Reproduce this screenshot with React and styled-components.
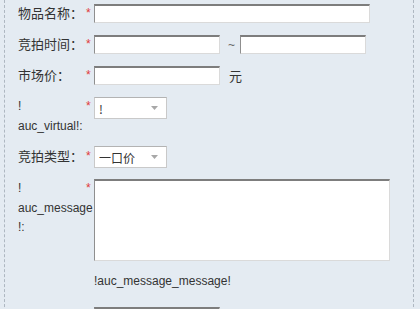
import React from 'react';
import styled, { createGlobalStyle } from 'styled-components';

const GlobalStyle = createGlobalStyle`
  html, body {
    margin: 0;
    padding: 0;
    background: #e4ebf2;
    overflow: hidden;
  }
  body {
    font-family: "Liberation Sans", "Noto Sans CJK SC", sans-serif;
    font-size: 12px;
    color: #333;
  }
`;

const Panel = styled.div`
  margin: 0 6px 0 4px;
  min-height: 100vh;
  box-sizing: border-box;
  border-left: 1px dashed #aeb7c1;
  border-right: 1px dashed #aeb7c1;
  padding: 4px 0 0 13px;
`;

const Row = styled.div`
  display: flex;
  align-items: flex-start;
  min-height: 20px;
  margin-bottom: 11px;
`;

const Label = styled.div`
  width: 76px;
  flex-shrink: 0;
  line-height: ${p => (p.$multi ? '19.5px' : '19px')};
  font-size: ${p => (p.$multi ? 12 : 13)}px;
  font-family: "Liberation Sans", "Noto Sans CJK SC", sans-serif;
`;

const Star = styled.span`
  float: right;
  width: 8px;
  color: #e03a3a;
  font-size: 12px;
  line-height: 18px;
`;

const Field = styled.div`
  display: flex;
  align-items: center;
  margin-top: ${p => p.$top || 0}px;
`;

const Input = styled.input`
  box-sizing: border-box;
  width: ${p => p.$w}px;
  height: 19px;
  margin: 0;
  padding: 0 3px;
  background: #fff;
  border: 1px solid;
  border-color: #7d7d7d #dadada #dadada #8f8f8f;
  border-top-width: 2px;
  outline: none;
  font: inherit;
`;

const Sep = styled.span`
  color: #666;
  margin: 0 5px 0 8px;
  font-size: 12px;
`;

const Unit = styled.span`
  margin-left: 9px;
  font-size: 13px;
  font-family: "Noto Sans CJK SC", sans-serif;
`;

const Select = styled.div`
  box-sizing: border-box;
  width: 73px;
  height: 22px;
  display: flex;
  align-items: center;
  justify-content: space-between;
  padding: 0 8px 0 4px;
  background: #fff;
  border: 1px solid #c9c9c9;
  border-top-color: #b3b3b3;
  font-family: "Noto Sans CJK SC", sans-serif;
`;

const TextArea = styled.textarea`
  box-sizing: border-box;
  width: 296px;
  height: 82px;
  margin: 0;
  padding: 2px;
  resize: none;
  background: #fff;
  border: 1px solid;
  border-color: #7d7d7d #dadada #dadada #8f8f8f;
  border-top-width: 2px;
  outline: none;
`;

const Hint = styled.div`
  margin-left: 76px;
  line-height: 19px;
  margin-bottom: 16px;
`;

const Arrow = () => (
  <svg width="7" height="4" viewBox="0 0 7 4">
    <path d="M0 0h7L3.5 4z" fill="#a8a8a8" />
  </svg>
);

const App = () => {
  return (
    <>
      <GlobalStyle />
      <Panel>
        <Row>
          <Label><Star>*</Star>物品名称：</Label>
          <Field><Input $w={276} /></Field>
        </Row>
        <Row>
          <Label><Star>*</Star>竞拍时间：</Label>
          <Field>
            <Input $w={126} />
            <Sep>~</Sep>
            <Input $w={126} />
          </Field>
        </Row>
        <Row>
          <Label><Star>*</Star>市场价：</Label>
          <Field>
            <Input $w={126} />
            <Unit>元</Unit>
          </Field>
        </Row>
        <Row>
          <Label $multi><Star>*</Star>!<br />auc_virtual!:</Label>
          <Field>
            <Select><span>!</span><Arrow /></Select>
          </Field>
        </Row>
        <Row>
          <Label><Star>*</Star>竞拍类型：</Label>
          <Field $top={-1}>
            <Select><span>一口价</span><Arrow /></Select>
          </Field>
        </Row>
        <Row>
          <Label $multi><Star>*</Star>!<br />auc_message<br />!:</Label>
          <Field><TextArea /></Field>
        </Row>
        <Hint>!auc_message_message!</Hint>
        <Row>
          <Label />
          <Field><Input $w={126} /></Field>
        </Row>
      </Panel>
    </>
  );
};

export default App;
